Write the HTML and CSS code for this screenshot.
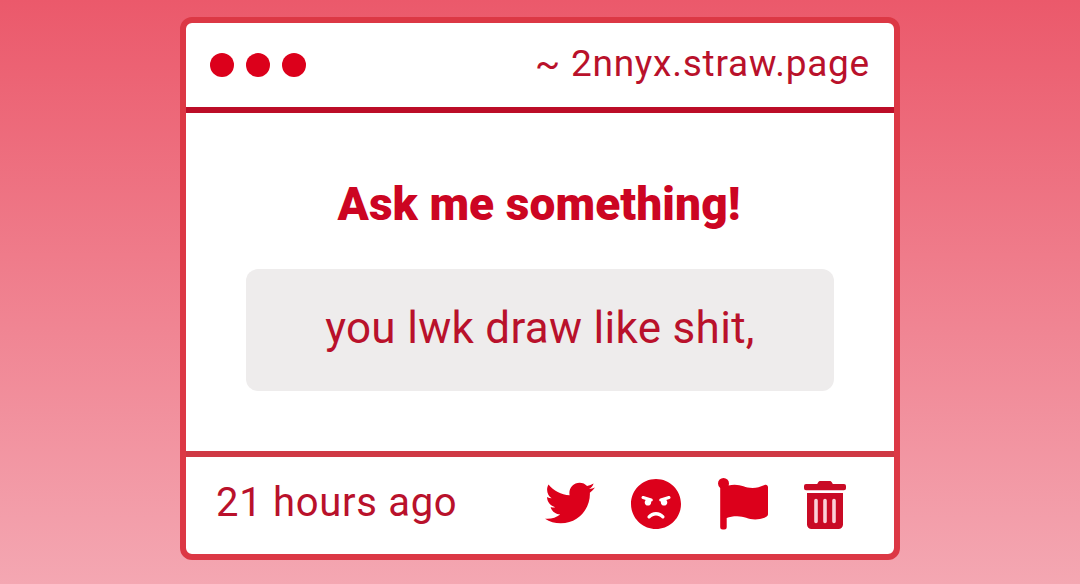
FILE: index.html
```html
<!DOCTYPE html>
<html lang="en">
<head>
    <meta charset="UTF-8">
    <meta name="viewport" content="width=device-width, initial-scale=1.0">
    <title>2nnyx.straw.page</title>
    <link rel="stylesheet" href="styles.css">
</head>
<body>

    <div class="card">
        <div class="card-header">
            <div class="dots">
                <span class="dot"></span>
                <span class="dot"></span>
                <span class="dot"></span>
            </div>
            <div class="site">~ 2nnyx.straw.page</div>
        </div>

        <div class="card-body">
            <h1 class="title">Ask me something!</h1>
            <div class="message">you lwk draw like shit,</div>
        </div>

        <div class="card-footer">
            <div class="time">21 hours ago</div>
            <div class="actions">
                <!-- Twitter -->
                <svg class="icon icon-twitter" viewBox="0 0 512 512">
                    <path d="M459.37 151.716c.325 4.548.325 9.097.325 13.645 0 138.72-105.583 298.558-298.558 298.558-59.452 0-114.68-17.219-161.137-47.106 8.447.974 16.568 1.299 25.34 1.299 49.055 0 94.213-16.568 130.274-44.832-46.132-.975-84.792-31.188-98.112-72.772 6.498.974 12.995 1.624 19.818 1.624 9.421 0 18.843-1.3 27.614-3.573-48.081-9.747-84.143-51.98-84.143-102.985v-1.299c13.969 7.797 30.214 12.67 47.431 13.319-28.264-18.843-46.781-51.005-46.781-87.391 0-19.492 5.197-37.36 14.294-52.954 51.655 63.675 129.3 105.258 216.365 109.807-1.624-7.797-2.599-15.918-2.599-24.04 0-57.828 46.782-104.934 104.934-104.934 30.213 0 57.502 12.67 76.67 33.137 23.715-4.548 46.456-13.32 66.599-25.34-7.798 24.366-24.366 44.833-46.132 57.827 21.117-2.273 41.584-8.122 60.426-16.243-14.292 20.791-32.161 39.308-52.628 54.253z"/>
                </svg>
                <!-- Angry face -->
                <svg class="icon icon-angry" viewBox="0 8 496 496">
                    <path d="M248 8C111 8 0 119 0 256s111 248 248 248 248-111 248-248S385 8 248 8zM136 240c0-9.3 4.1-17.5 10.5-23.4l-31-9.3c-8.5-2.5-13.3-11.5-10.7-19.9 2.5-8.5 11.4-13.2 19.9-10.7l80 24c8.5 2.5 13.3 11.5 10.7 19.9-2.1 6.9-8.4 11.4-15.3 11.4-.5 0-1.1-.2-1.7-.2.7 2.7 1.7 5.3 1.7 8.2 0 17.7-14.3 32-32 32S136 257.700 136 240zm168 154.200c-27.800-33.400-84.200-33.400-112.100 0-13.500 16.300-38.200-4.200-24.600-20.500 20-24 49.400-37.600 80.600-37.600s60.600 13.600 80.600 37.600c13.800 16.500-11.100 36.600-24.500 20.500zm76.600-186.900l-31 9.300c6.300 5.800 10.500 14.100 10.500 23.400 0 17.700-14.300 32-32 32s-32-14.300-32-32c0-2.900.9-5.600 1.700-8.200-.6.1-1.100.2-1.700.2-6.900 0-13.200-4.500-15.300-11.400-2.500-8.500 2.300-17.400 10.700-19.900l80-24c8.400-2.500 17.400 2.300 19.900 10.700 2.500 8.500-2.300 17.400-10.800 19.900z"/>
                </svg>
                <!-- Flag -->
                <svg class="icon icon-flag" viewBox="0 0 50 52">
                    <path d="M0 5.500a5.500 5.500 0 0 1 11 0c0 .8-.2 1.500-.4 2.100 1.800-.6 3.800-.9 6-.9 7 0 10.500 3.200 18 3.200 4.500 0 8-1.200 12-2.900 1.700-.8 3.400.3 3.400 2.200V36c0 1-.5 1.900-1.300 2.400-3 1.900-7 3-11.500 3-7 0-11-3.200-18-3.200-4.500 0-7.500.6-10.500 1.800V49a2.500 2.500 0 0 1-2.500 2.500H4.700A2.500 2.500 0 0 1 2.200 49V9.900A5.500 5.500 0 0 1 0 5.500z"/>
                </svg>
                <!-- Trash -->
                <svg class="icon icon-trash" viewBox="0 0 42 50">
                    <path d="M2 4h11.200l1-1.700C14.700 1.400 15.500 1 16.500 1h9c1 0 1.800.4 2.300 1.300l1 1.700H40a2 2 0 0 1 2 2v2.200a2 2 0 0 1-2 2H2a2 2 0 0 1-2-2V6a2 2 0 0 1 2-2zM3 13h36v31.500a4.500 4.500 0 0 1-4.500 4.500h-27A4.500 4.500 0 0 1 3 44.500z"/>
                    <path class="bars" d="M12 20.500v21M21 20.500v21M30 20.500v21"/>
                </svg>
            </div>
        </div>
    </div>

</body>
</html>
```
FILE: styles.css
```css
* {
    box-sizing: border-box;
}
body {
    margin: 0;
    height: 584px;
    padding-top: 17px;
    font-family: Roboto, "Liberation Sans", sans-serif;
    color: #b9112b;
    background: linear-gradient(#eb596b, #f4a7b2);
    overflow: hidden;
}

.card {
    display: flex;
    flex-direction: column;
    width: 720px;
    height: 543px;
    margin: 0 auto;
    background-color: #fff;
    border: 6px solid #dc3845;
    border-radius: 12px;
}

/* Header */
.card-header {
    display: flex;
    justify-content: space-between;
    align-items: center;
    height: 90px;
    padding: 0 24px;
    border-bottom: 6px solid #bc0d28;
}
.dots {
    display: flex;
    gap: 12px;
}
.dot {
    width: 24px;
    height: 24px;
    border-radius: 50%;
    background-color: #dc001b;
}
.site {
    padding-bottom: 4px;
    font-size: 37px;
    letter-spacing: 0.75px;
}

/* Body */
.card-body {
    flex: 1;
    padding: 60px;
}
.title {
    margin: 0;
    height: 96px;
    padding-right: 2px;
    line-height: 62px;
    font-size: 46px;
    font-weight: 900;
    letter-spacing: 0.1px;
    text-align: center;
    color: #cc0522;
}
.message {
    height: 122px;
    line-height: 118px;
    font-size: 44px;
    letter-spacing: 0.3px;
    text-align: center;
    background-color: #eeecec;
    border-radius: 12px;
}

/* Footer */
.card-footer {
    display: flex;
    justify-content: space-between;
    align-items: center;
    height: 103px;
    padding: 0 48px 2px 30px;
    border-top: 6px solid #cf3944;
}
.time {
    padding-bottom: 4px;
    font-size: 40px;
    letter-spacing: 0.7px;
}
.actions {
    display: flex;
    align-items: center;
}
.icon {
    width: 50px;
    height: 50px;
    margin-right: 36px;
    fill: #dc001b;
}
.icon-twitter {
    margin-top: -4px;
}
.icon-angry {
    margin-top: -1px;
    margin-right: 37px;
}
.icon-flag {
    height: 52px;
    margin-top: -2px;
}
.icon-trash {
    width: 42px;
    margin-right: 0;
    fill: #c90a25;
}
.bars {
    stroke: #fbd0d8;
    stroke-width: 3.6;
    stroke-linecap: round;
}
```
